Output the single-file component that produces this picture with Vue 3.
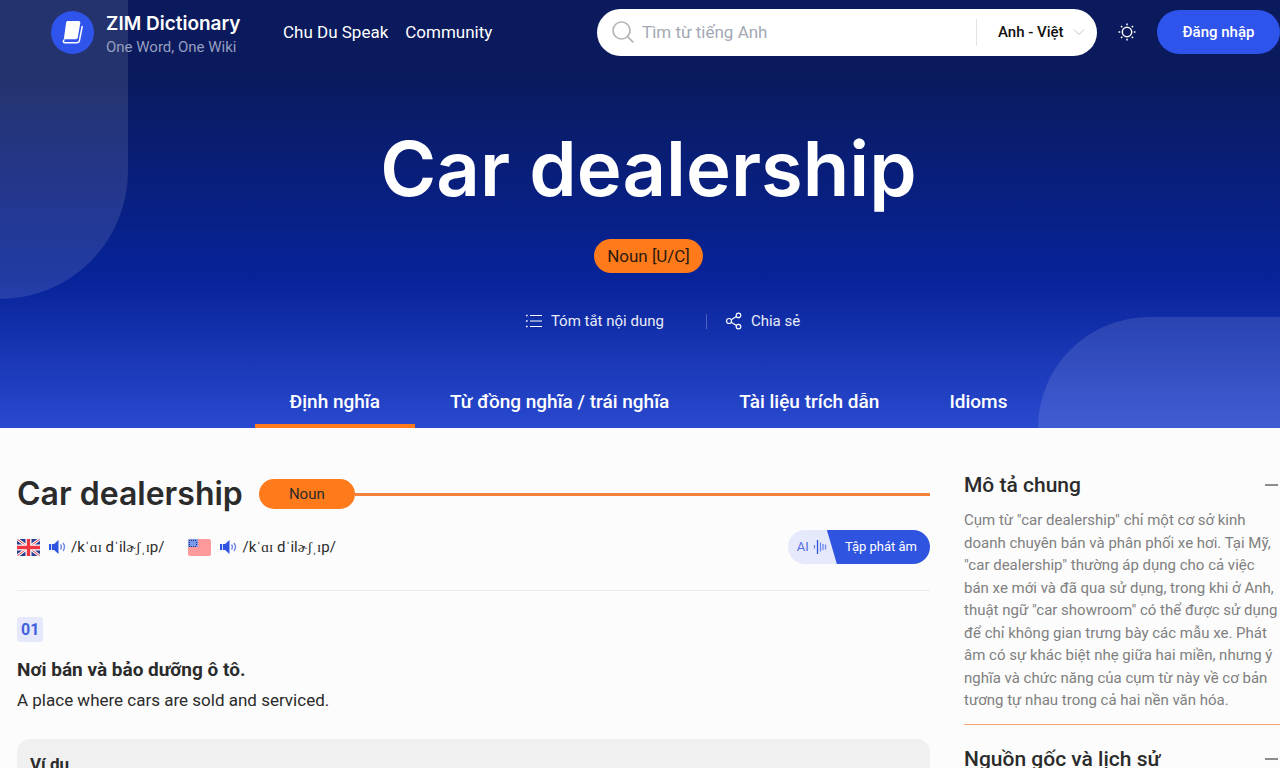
<script setup>
import { ref } from 'vue'

const query = ref('')
const direction = ref('en-vi')
const activeTab = ref(0)
const tabs = ['Định nghĩa', 'Từ đồng nghĩa / trái nghĩa', 'Tài liệu trích dẫn', 'Idioms']
const ipa = '/kˈɑɪ dˈilɚʃˌɪp/'
const description =
  'Cụm từ "car dealership" chỉ một cơ sở kinh doanh chuyên bán và phân phối xe hơi. Tại Mỹ, "car dealership" thường áp dụng cho cả việc bán xe mới và đã qua sử dụng, trong khi ở Anh, thuật ngữ "car showroom" có thể được sử dụng để chỉ không gian trưng bày các mẫu xe. Phát âm có sự khác biệt nhẹ giữa hai miền, nhưng ý nghĩa và chức năng của cụm từ này về cơ bản tương tự nhau trong cả hai nền văn hóa.'
</script>

<template>
  <div class="page">
    <section class="banner">
      <header class="topbar">
        <a class="brand" href="#">
          <span class="brand-mark">
            <svg width="24" height="26" viewBox="0 0 24 26" aria-hidden="true">
              <path d="M6.800 2h10.800c1.200 0 1.900.8 1.700 1.900L16.800 18.500c-.2 1-1 1.700-2 1.700H4.800c-.9 0-1.600.3-2.100.9L5.100 3.700C5.300 2.700 5.900 2 6.800 2z" fill="#fff" />
              <path d="M21.200 7.500 18.400 21.700c-.2 1.200-1.100 2-2.300 2H4c-1.600 0-2.200-1.400-1.200-2.400" fill="none" stroke="#fff" stroke-width="1.500" stroke-linecap="round" />
            </svg>
          </span>
          <span class="brand-text">
            <strong>ZIM Dictionary</strong>
            <span>One Word, One Wiki</span>
          </span>
        </a>
        <nav class="links" aria-label="Menu">
          <a href="#">Chu Du Speak</a>
          <a href="#">Community</a>
        </nav>
        <form class="search" @submit.prevent>
          <svg width="22" height="22" viewBox="0 0 22 22" fill="none" stroke="#b5b5b5" stroke-width="1.700" aria-hidden="true">
            <circle cx="9.500" cy="9.500" r="8.500" />
            <path d="m15.600 15.600 5.700 5.700" />
          </svg>
          <input v-model="query" type="text" placeholder="Tìm từ tiếng Anh" aria-label="Tìm từ tiếng Anh" />
          <label class="direction">
            <select v-model="direction" aria-label="Ngôn ngữ">
              <option value="en-vi">Anh - Việt</option>
            </select>
            <svg width="12" height="8" viewBox="0 0 12 8" fill="none" stroke="#c4c4c4" aria-hidden="true"><path d="m1 1.500 5 5 5-5" /></svg>
          </label>
        </form>
        <button class="theme" type="button" aria-label="Giao diện">
          <svg width="20" height="20" viewBox="0 0 20 20" fill="none" stroke="#fff" aria-hidden="true">
            <circle cx="10" cy="10" r="4.700" stroke-width="1.500" />
            <path stroke-width="1.500" d="M10 1.500v1.700M10 16.800v1.700M1.500 10h1.700M16.800 10h1.700M4 4l1.200 1.200M14.800 14.800 16 16M4 16l1.200-1.200M14.800 5.200 16 4" />
          </svg>
        </button>
        <button class="login" type="button">Đăng nhập</button>
      </header>

      <div class="hero">
        <h1>Car dealership</h1>
        <span class="tag">Noun [U/C]</span>
        <div class="actions">
          <button type="button">
            <svg width="18" height="16" viewBox="0 0 18 16" fill="none" stroke="#fff" stroke-width="1.200" aria-hidden="true">
              <path d="M5 2.500h12M5 8h12M5 13.500h12" /><path stroke-width="1.600" d="M1 2.500h1.600M1 8h1.600M1 13.500h1.600" />
            </svg>
            Tóm tắt nội dung
          </button>
          <i class="split"></i>
          <button type="button">
            <svg width="18" height="18" viewBox="0 0 18 18" fill="none" stroke="#fff" stroke-width="1.200" aria-hidden="true">
              <circle cx="4" cy="9" r="2.500" /><circle cx="13.500" cy="3.400" r="2.300" /><circle cx="13.500" cy="14.600" r="2.300" />
              <path d="m6.200 7.700 5.200-3.100M6.200 10.300l5.200 3.100" />
            </svg>
            Chia sẻ
          </button>
        </div>
      </div>

      <nav class="tabs" aria-label="Mục">
        <a v-for="(tab, i) in tabs" :key="tab" href="#" :class="{ active: i === activeTab }" @click.prevent="activeTab = i">{{ tab }}</a>
      </nav>
    </section>

    <div class="columns">
      <main>
        <div class="word">
          <h2>Car dealership</h2>
          <span class="pill">Noun</span>
          <i class="rule"></i>
        </div>

        <div class="sounds">
          <svg class="flag" width="23" height="17" viewBox="0 0 23 17" aria-hidden="true">
            <clipPath id="uk"><rect width="23" height="17" rx="2" /></clipPath>
            <g clip-path="url(#uk)">
              <path fill="#273b8f" d="M0 0h23v17H0z" />
              <path stroke="#fff" stroke-width="3" d="m0 0 23 17M23 0 0 17" />
              <path stroke="#e8323c" d="m0 0 23 17M23 0 0 17" />
              <path stroke="#fff" stroke-width="6" d="M11.500 0v17M0 8.500h23" />
              <path stroke="#ee3540" stroke-width="3.400" d="M11.500 0v17M0 8.500h23" />
            </g>
          </svg>
          <button class="speak" type="button" aria-label="Nghe giọng Anh">
            <svg width="17" height="14" viewBox="0 0 17 14" aria-hidden="true">
              <path fill="#2f54e0" d="M0 4h2.200v6H0zM3 4h2.100L9.500 0v14L5.100 10H3z" />
              <path fill="none" stroke="#7189ea" stroke-width="1.400" d="M11.500 4.500q1.800 2.500 0 5M14 3q3 4 0 8" />
            </svg>
          </button>
          <span class="ipa">{{ ipa }}</span>
          <svg class="flag us" width="23" height="17" viewBox="0 0 23 17" aria-hidden="true">
            <rect width="23" height="17" rx="2" fill="#ff9a9c" />
            <path fill="#7b9bea" d="M0 8V2a2 2 0 0 1 2-2h8v8z" />
            <path stroke="#14307f" stroke-dasharray="1 1" d="M1 1.500h8M1 3.500h1M8 3.500h1M1 5.500h1M8 5.500h1M1 7.500h8" />
          </svg>
          <button class="speak" type="button" aria-label="Nghe giọng Mỹ">
            <svg width="17" height="14" viewBox="0 0 17 14" aria-hidden="true">
              <path fill="#2f54e0" d="M0 4h2.200v6H0zM3 4h2.100L9.500 0v14L5.100 10H3z" />
              <path fill="none" stroke="#7189ea" stroke-width="1.400" d="M11.500 4.500q1.800 2.500 0 5M14 3q3 4 0 8" />
            </svg>
          </button>
          <span class="ipa">{{ ipa }}</span>
          <button class="practice" type="button">
            <span class="ai">
              AI
              <svg width="14" height="14" viewBox="0 0 14 14" fill="none" stroke="#6f86ea" stroke-width="1.300" aria-hidden="true">
                <path d="M1.500 5v3.500M7.500 2.500v9M10 4v6M12.500 4.500v5" /><path stroke="#3152dc" d="M4.500 0v14" />
              </svg>
            </span>
            <span class="go">Tập phát âm</span>
          </button>
        </div>

        <article>
          <span class="number">01</span>
          <h3>Nơi bán và bảo dưỡng ô tô.</h3>
          <p>A place where cars are sold and serviced.</p>
          <div class="example"><h4>Ví dụ</h4></div>
        </article>
      </main>

      <aside>
        <section>
          <h2>Mô tả chung <button type="button" aria-label="Thu gọn"></button></h2>
          <p>{{ description }}</p>
        </section>
        <section>
          <h2>Nguồn gốc và lịch sử <button type="button" aria-label="Thu gọn"></button></h2>
        </section>
      </aside>
    </div>
  </div>
</template>

<style>
body {
  background: #fcfcfc;
  overflow: hidden;
}
</style>

<style scoped>
* {
  box-sizing: border-box;
}
h1, h2, h3, h4, p {
  margin: 0;
}
a {
  color: inherit;
  text-decoration: none;
}
button, input, select {
  padding: 0;
  border: 0;
  outline: 0;
  background: none;
  color: inherit;
  font: inherit;
}
svg {
  display: block;
  flex: none;
}
.page {
  height: 100vh;
  overflow: hidden;
  background: #fcfcfc;
  color: #2b2b2b;
  font: 16px/24px Roboto, "Liberation Sans", sans-serif;
}
.banner {
  position: relative;
  overflow: hidden;
  background: linear-gradient(180deg, #0a1a5c 0%, #0a1a5c 17%, #072399 65%, #2949cf 100%);
  color: #fff;
}
.banner::before, .banner::after {
  content: "";
  position: absolute;
  background: rgba(255, 255, 255, 0.11);
}
.banner::before {
  top: 0;
  left: 0;
  width: 128px;
  height: 299px;
  border-bottom-right-radius: 128px;
}
.banner::after {
  right: 0;
  bottom: 0;
  width: 242px;
  height: 111px;
  border-top-left-radius: 111px;
}
.topbar, .hero, .tabs {
  position: relative;
  z-index: 1;
}
.topbar {
  display: flex;
  align-items: center;
  height: 64px;
  padding-left: 51px;
}
.brand {
  display: flex;
  align-items: center;
  gap: 12px;
  width: 232px;
}
.brand-mark {
  display: grid;
  place-items: center;
  width: 43px;
  height: 43px;
  border-radius: 50%;
  background: #2f54eb;
}
.brand-text {
  display: grid;
  padding-top: 6px;
  color: #959ebf;
  font-size: 15px;
  line-height: 22px;
}
.brand-text strong {
  color: #fff;
  font: 600 19px/24px Inter, sans-serif;
}
.links {
  display: flex;
  flex: 1;
  gap: 17px;
  font-size: 17px;
}
.search {
  display: flex;
  align-items: center;
  width: 500px;
  height: 47px;
  padding: 0 12px 0 15px;
  border-radius: 24px;
  background: #fff;
}
.search input {
  flex: 1;
  min-width: 0;
  margin-left: 8px;
  color: #222;
  font-size: 17px;
}
.search input::placeholder {
  color: #a3a8b3;
}
.direction {
  display: flex;
  align-items: center;
  gap: 9px;
  height: 27px;
  padding-left: 21px;
  border-left: 1px solid #e3e3e6;
  color: #111;
  font-size: 15px;
  font-weight: 500;
}
.direction select {
  appearance: none;
}
.theme {
  margin: 0 20px;
}
.login {
  width: 123px;
  height: 44px;
  border-radius: 22px;
  background: #2f54eb;
  font-size: 15px;
  font-weight: 500;
}
.hero {
  display: flex;
  flex-direction: column;
  align-items: center;
  padding: 56px 0 0 17px;
}
h1 {
  font: 600 76px/96px Inter, sans-serif;
}
.tag {
  margin-top: 23px;
  padding: 0 13px;
  border-radius: 17px;
  background: #ff7a1a;
  color: #2b1a10;
  font-size: 17px;
  line-height: 34px;
}
.actions {
  display: flex;
  align-items: center;
  margin: 36px 0 0 28px;
  color: #e8ebf8;
  font-size: 15px;
}
.actions button {
  display: flex;
  align-items: center;
  gap: 8px;
}
.split {
  width: 1px;
  height: 15px;
  margin: 0 18px 0 42px;
  background: rgba(255, 255, 255, 0.25);
}
.tabs {
  display: flex;
  justify-content: center;
  margin-top: 43px;
  padding-left: 17px;
  font-size: 19px;
  font-weight: 500;
}
.tabs a {
  padding: 14px 35px 10px;
  border-bottom: 4px solid transparent;
}
.tabs a.active {
  border-color: #ff7a1a;
}
.columns {
  display: grid;
  grid-template-columns: minmax(0, 1fr) 316px;
  gap: 34px;
  padding-left: 17px;
}
main {
  padding-top: 43px;
}
.word {
  display: flex;
  align-items: center;
  height: 46px;
}
.word h2 {
  font: 600 32px/46px Inter, sans-serif;
}
.pill {
  width: 96px;
  margin-left: 16px;
  border-radius: 15px;
  background: #ff7a1a;
  font-size: 15px;
  line-height: 30px;
  text-align: center;
}
.rule {
  flex: 1;
  height: 3px;
  background: #f5813a;
}
.sounds {
  display: flex;
  align-items: center;
  padding: 13px 0 26px;
  border-bottom: 1px solid #ebebeb;
}
.speak {
  margin: 0 5px 0 9px;
}
.ipa {
  font-family: Roboto, "Liberation Serif", serif;
  font-size: 15px;
}
.us {
  margin-left: 24px;
}
.practice {
  display: flex;
  height: 34px;
  margin-left: auto;
  overflow: hidden;
  border-radius: 17px;
  background: #e5e9fb;
  font-size: 13px;
}
.ai {
  display: flex;
  align-items: center;
  gap: 4px;
  padding-left: 9px;
  color: #5571e4;
}
.go {
  align-self: stretch;
  padding: 0 13px 0 18px;
  background: #2f54e0;
  color: #fff;
  line-height: 34px;
  clip-path: polygon(0 0, 100% 0, 100% 100%, 10px 100%);
}
article {
  padding-top: 26px;
}
.number {
  display: inline-block;
  padding: 0 4px;
  border-radius: 3px;
  background: #e5e9fb;
  color: #4461dc;
  font-weight: 700;
  line-height: 25px;
}
h3 {
  margin-top: 15px;
  font-size: 19px;
  line-height: 26px;
}
article p {
  margin-top: 5px;
  font-size: 17px;
}
.example {
  height: 160px;
  margin-top: 27px;
  padding: 13px;
  border-radius: 13px;
  background: #f0f0f0;
}
h4 {
  font-size: 17px;
}
aside {
  padding-top: 40px;
}
aside section {
  padding-bottom: 12px;
  margin-bottom: 17px;
  border-bottom: 1px solid #f5a270;
}
aside h2 {
  display: flex;
  align-items: center;
  justify-content: space-between;
  font-size: 21px;
  font-weight: 500;
  line-height: 34px;
}
aside h2 button {
  width: 15px;
  height: 15px;
  background: linear-gradient(#8c8c8c, #8c8c8c) left center / 13px 2px no-repeat;
}
aside p {
  margin-top: 7px;
  color: #808080;
  font-size: 15px;
  line-height: 1.5;
}
</style>
